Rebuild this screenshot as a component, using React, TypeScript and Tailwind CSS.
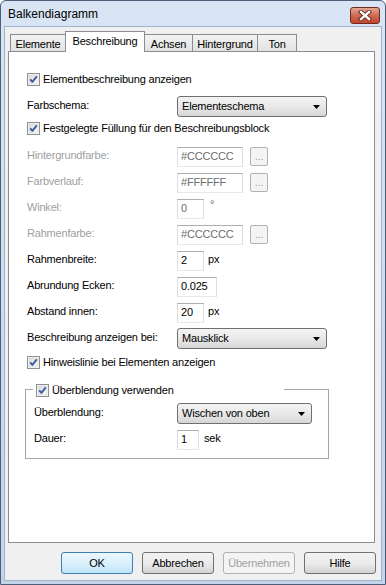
import React from "react";

const Check = () => (
  <svg width="13" height="13" viewBox="0 0 13 13" className="shrink-0">
    <defs>
      <linearGradient id="cbg" x1="0" y1="0" x2="1" y2="1">
        <stop offset="0" stopColor="#dcdcdc" />
        <stop offset="1" stopColor="#fbfbfb" />
      </linearGradient>
    </defs>
    <rect x="0.5" y="0.5" width="12" height="12" fill="#ffffff" stroke="#8f8f8f" />
    <rect x="2" y="2" width="9" height="9" fill="url(#cbg)" stroke="#c9cbcf" strokeWidth="0.6" />
    <path d="M3.2 6.4 L5.4 8.9 L9.8 3.3" fill="none" stroke="#3d5aa0" strokeWidth="1.9" strokeLinejoin="round" />
  </svg>
);

const Arrow = () => (
  <svg width="7" height="4" viewBox="0 0 7 4" className="shrink-0">
    <path d="M0 0 L7 0 L3.5 4 Z" fill="#000" />
  </svg>
);

const Dropdown = ({ value, w }: { value: string; w: string }) => (
  <div
    className={`${w} h-[21px] rounded-[3px] border border-[#707070] bg-gradient-to-b from-[#f3f3f3] via-[#e9e9e9] to-[#d6d6d6] flex items-center justify-between pl-[4px] pr-[6px] text-black`}
  >
    <span>{value}</span>
    <Arrow />
  </div>
);

const Input = ({ value, w, disabled }: { value: string; w: string; disabled?: boolean }) => (
  <div
    className={`${w} h-[20px] border border-[#abadb3] border-l-[#dadde3] border-r-[#dadde3] border-b-[#e3e9ef] bg-white flex items-center pl-[3px] ${
      disabled ? "text-[#6d6d6d]" : "text-black"
    }`}
  >
    {value}
  </div>
);

const Dots = () => (
  <div className="ml-[7px] w-[18px] h-[19px] rounded-[2px] border border-[#adb2b5] bg-[#f4f4f4] flex items-end justify-center pb-[3px] text-[#a0a0a0] leading-none">
    ...
  </div>
);

const Row = ({
  label,
  disabled,
  children,
  className,
  labelW = "w-[150px]",
}: {
  label: string;
  disabled?: boolean;
  children: React.ReactNode;
  className?: string;
  labelW?: string;
}) => (
  <div className={`flex items-center h-[21px] ${className ?? ""}`}>
    <div className={`${labelW} shrink-0 mb-[3px] ${disabled ? "text-[#a0a0a0]" : "text-black"}`}>{label}</div>
    {children}
  </div>
);

const Tab = ({ label, w, selected, first }: { label: string; w: string; selected?: boolean; first?: boolean }) =>
  selected ? (
    <div
      className={`${w} h-[21px] -mb-px ${first ? "" : "-ml-px"} relative z-10 border border-b-0 border-[#898c95] bg-white flex justify-center pt-[1px]`}
    >
      {label}
    </div>
  ) : (
    <div
      className={`${w} h-[17px] ${first ? "" : "-ml-px"} border border-b-0 border-[#898c95] bg-gradient-to-b from-[#f3f3f3] to-[#e2e2e2] flex justify-center pt-[1px]`}
    >
      {label}
    </div>
  );

const Btn = ({ label, kind }: { label: string; kind?: "default" | "disabled" }) => {
  const cls =
    kind === "default"
      ? "border-[#3c7fb1] bg-gradient-to-b from-[#ecf7fd] via-[#dbf0fc] to-[#bfe5fa] text-black"
      : kind === "disabled"
      ? "border-[#adb2b5] bg-[#f4f4f4] text-[#a0a0a0]"
      : "border-[#707070] bg-gradient-to-b from-[#f2f2f2] via-[#ebebeb] to-[#d3d3d3] text-black";
  return (
    <div className={`w-[72px] h-[22px] rounded-[3px] border ${cls} flex items-center justify-center`}>{label}</div>
  );
};

export default function App() {
  return (
    <div className="w-[386px] h-[585px] flex flex-col border border-[#4d5f78] rounded-t-[6px] bg-gradient-to-b from-[#d9e5f4] to-[#c3d4ea] font-['Liberation_Sans',Arial,sans-serif] text-[11px] tracking-[-0.2px] text-black overflow-hidden">
      {/* Title bar */}
      <div className="h-[25px] shrink-0 flex items-center justify-between pl-[7px] pr-[5px]">
        <span className="text-[12px] tracking-normal mt-[1px]">Balkendiagramm</span>
        <div className="w-[30px] h-[17px] mt-[3px] rounded-[3px] border border-[#6e2b20] bg-gradient-to-b from-[#e4a695] via-[#cf6a53] to-[#c2452c] flex items-center justify-center">
          <svg width="14" height="11" viewBox="0 0 14 11">
            <path d="M3 2 L11 9 M11 2 L3 9" stroke="#5a2219" strokeWidth="4.2" strokeLinecap="square" />
            <path d="M3 2 L11 9 M11 2 L3 9" stroke="#ffffff" strokeWidth="2.4" strokeLinecap="square" />
          </svg>
        </div>
      </div>

      {/* Client */}
      <div className="flex-1 flex pl-[3px] pr-[3px] pb-[3px]">
        <div className="flex-1 border border-[#9fb3cc] bg-[#f0f0f0] flex flex-col">
          {/* Tabs */}
          <div className="h-[20px] mt-[4px] flex items-end pl-[5px]">
            <Tab label="Elemente" w="w-[56px]" first />
            <Tab label="Beschreibung" w="w-[80px]" selected />
            <Tab label="Achsen" w="w-[49px]" />
            <Tab label="Hintergrund" w="w-[66px]" />
            <Tab label="Ton" w="w-[40px]" />
          </div>

          {/* Panel */}
          <div className="ml-[3px] w-[367px] h-[492px] border border-[#898c95] bg-white flex flex-col pt-[19px] pl-[18px]">
            <div className="flex items-center h-[16px] gap-[3px]">
              <Check />
              <span>Elementbeschreibung anzeigen</span>
            </div>

            <Row label="Farbschema:" className="mt-[9px]">
              <Dropdown value="Elementeschema" w="w-[150px]" />
            </Row>

            <div className="flex items-center h-[16px] gap-[3px] mt-[3px]">
              <Check />
              <span>Festgelegte Füllung für den Beschreibungsblock</span>
            </div>

            <Row label="Hintergrundfarbe:" disabled className="mt-[10px]">
              <Input value="#CCCCCC" w="w-[66px]" disabled />
              <Dots />
            </Row>
            <Row label="Farbverlauf:" disabled className="mt-[5px]">
              <Input value="#FFFFFF" w="w-[66px]" disabled />
              <Dots />
            </Row>
            <Row label="Winkel:" disabled className="mt-[5px]">
              <Input value="0" w="w-[27px]" disabled />
              <span className="ml-[6px] mb-[8px] text-[#6d6d6d]">°</span>
            </Row>
            <Row label="Rahmenfarbe:" disabled className="mt-[5px]">
              <Input value="#CCCCCC" w="w-[66px]" disabled />
              <Dots />
            </Row>
            <Row label="Rahmenbreite:" className="mt-[5px]">
              <Input value="2" w="w-[27px]" />
              <span className="ml-[4px] mb-[3px]">px</span>
            </Row>
            <Row label="Abrundung Ecken:" className="mt-[5px]">
              <Input value="0.025" w="w-[40px]" />
            </Row>
            <Row label="Abstand innen:" className="mt-[5px]">
              <Input value="20" w="w-[27px]" />
              <span className="ml-[4px] mb-[3px]">px</span>
            </Row>
            <Row label="Beschreibung anzeigen bei:" className="mt-[5px]">
              <Dropdown value="Mausklick" w="w-[150px]" />
            </Row>

            <div className="flex items-center h-[16px] gap-[3px] mt-[5px]">
              <Check />
              <span>Hinweislinie bei Elementen anzeigen</span>
            </div>

            {/* Group box */}
            <div className="relative mt-[19px] -ml-[2px] w-[304px] h-[70px] border border-[#a5a5a5] pt-[13px] pl-[8px]">
              <div className="absolute left-[7px] -top-[8px] w-[251px] h-[16px] bg-white flex items-center gap-[3px] pl-[3px]">
                <Check />
                <span>Überblendung verwenden</span>
              </div>
              <Row label="Überblendung:" labelW="w-[143px]">
                <Dropdown value="Wischen von oben" w="w-[135px]" />
              </Row>
              <Row label="Dauer:" labelW="w-[143px]" className="mt-[5px]">
                <Input value="1" w="w-[22px]" />
                <span className="ml-[5px] mb-[3px]">sek</span>
              </Row>
            </div>
          </div>

          {/* Buttons */}
          <div className="mt-[9px] flex justify-end gap-[9px] pr-[5px]">
            <Btn label="OK" kind="default" />
            <Btn label="Abbrechen" />
            <Btn label="Übernehmen" kind="disabled" />
            <Btn label="Hilfe" />
          </div>
        </div>
      </div>
    </div>
  );
}
